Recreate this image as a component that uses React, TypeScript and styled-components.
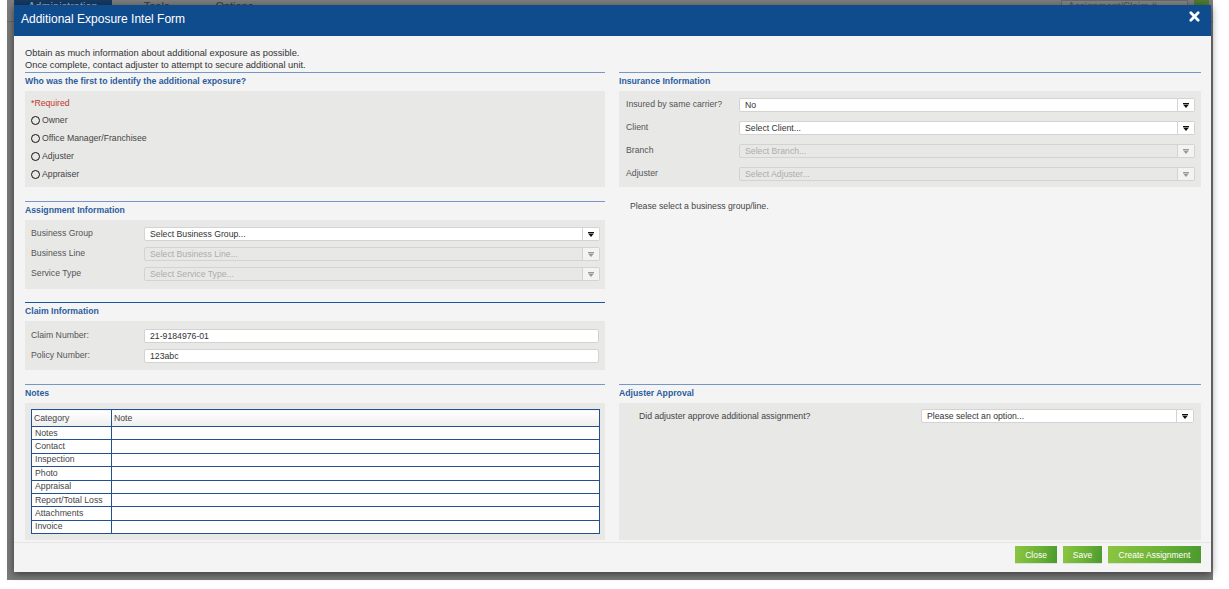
import React from 'react';
import styled, { createGlobalStyle } from 'styled-components';

const Global = createGlobalStyle`
  html, body { margin: 0; padding: 0; background: #fff; }
  body { font-family: "Liberation Sans", Arial, sans-serif; }
  * { box-sizing: border-box; }
`;

const Screen = styled.div`
  width: 1229px;
  height: 589px;
  overflow: hidden;
  background: #fff;
`;

const Backdrop = styled.div`
  position: relative;
  margin-left: 7px;
  width: 1206px;
  height: 580px;
  background: #7b7b7b;
`;

const NavBar = styled.div`
  height: 22px;
  display: flex;
  align-items: stretch;
  padding-left: 7px;
  background: #7e7e7e;
  border-bottom: 1px solid #6a6a6a;
`;

const NavTab = styled.div<{ $active?: boolean }>`
  padding: 0 14px;
  font-size: 11px;
  line-height: 12px;
  color: ${(p) => (p.$active ? '#9fb0c4' : '#3a3a3a')};
  background: ${(p) => (p.$active ? '#163a63' : 'transparent')};
  margin-right: 18px;
`;

const NavSpacer = styled.div`
  flex: 1;
`;

const NavSearch = styled.div`
  width: 127px;
  height: 14px;
  border: 1px solid #6a6a6a;
  background: #858585;
  font-size: 10px;
  line-height: 12px;
  color: #5a5a5a;
  padding-left: 6px;
`;

const NavGo = styled.div`
  width: 15px;
  height: 10px;
  margin: 0 4px 0 6px;
  background: #4e7b30;
`;

const Modal = styled.div`
  position: absolute;
  left: 7px;
  top: 5px;
  width: 1197px;
  height: 567px;
  background: #f4f4f4;
  display: flex;
  flex-direction: column;
  box-shadow: 0 2px 8px rgba(0, 0, 0, 0.55);
`;

const Header = styled.div`
  height: 31px;
  flex: none;
  background: #0f4c8e;
  display: flex;
  align-items: center;
  justify-content: space-between;
  padding: 0 11px 3px 7px;
`;

const Title = styled.div`
  color: #fff;
  font-size: 12px;
`;

const CloseIcon = styled.svg`
  width: 11px;
  height: 11px;
  margin-top: -5px;
`;

const Body = styled.div`
  flex: 1;
  padding: 11px 10px 0 11px;
  display: flex;
  flex-direction: column;
`;

const Intro = styled.div`
  font-size: 9.3px;
  line-height: 12px;
  color: #333;
  height: 25px;
`;

const Columns = styled.div`
  display: grid;
  grid-template-columns: 580px 582px;
  column-gap: 14px;
  row-gap: 14px;
`;

const Stack = styled.div<{ $gap?: number }>`
  display: flex;
  flex-direction: column;
  gap: ${(p) => p.$gap ?? 14}px;
`;

const Section = styled.div<{ $mt?: number }>`
  display: flex;
  flex-direction: column;
  margin-top: ${(p) => p.$mt ?? 0}px;
`;

const SectionHeader = styled.div<{ $dark?: boolean }>`
  border-top: 1px solid ${(p) => (p.$dark ? '#1b56a0' : '#7497c5')};
  height: 19px;
  line-height: 16px;
  font-size: 8.7px;
  font-weight: bold;
  color: #2b5d9d;
`;

const Panel = styled.div<{ $pad?: string; $gap?: number; $grow?: boolean }>`
  background: #e8e8e7;
  padding: ${(p) => p.$pad ?? '7px 6px 7px 6px'};
  display: flex;
  flex-direction: column;
  gap: ${(p) => p.$gap ?? 6}px;
  flex: ${(p) => (p.$grow ? 1 : 'none')};
`;

const Required = styled.div`
  font-size: 8.7px;
  line-height: 12px;
  color: #c0392b;
  margin-bottom: 2px;
`;

const RadioRow = styled.label`
  height: 18px;
  display: flex;
  align-items: center;
  gap: 2px;
  font-size: 8.7px;
  color: #444;
`;

const RadioCircle = styled.span`
  width: 9px;
  height: 9px;
  border: 1.3px solid #111;
  border-radius: 50%;
  flex: none;
`;

const FieldRow = styled.div`
  display: grid;
  grid-template-columns: 113px 1fr;
  align-items: center;
  height: 14px;
`;

const Label = styled.div`
  font-size: 8.7px;
  color: #555;
  margin-top: -3px;
`;

const SelectBox = styled.div<{ $disabled?: boolean }>`
  height: 14px;
  display: flex;
  background: ${(p) => (p.$disabled ? '#e8e8e7' : '#fff')};
  border: 1px solid #d3d3d3;
  border-radius: 2px;
  font-size: 8.7px;
  color: ${(p) => (p.$disabled ? '#adadad' : '#333')};
`;

const SelectText = styled.span`
  flex: 1;
  padding-left: 5px;
  line-height: 12px;
  white-space: nowrap;
  overflow: hidden;
`;

const SelectArrow = styled.span<{ $disabled?: boolean }>`
  width: 17px;
  flex: none;
  border-left: 1px solid #d3d3d3;
  background: ${(p) => (p.$disabled ? '#f3f3f3' : '#fff')};
  display: flex;
  align-items: center;
  justify-content: center;
`;

const TextInput = styled.div`
  height: 14px;
  background: #fff;
  border: 1px solid #d3d3d3;
  border-radius: 2px;
  font-size: 8.7px;
  line-height: 12px;
  color: #333;
  padding-left: 5px;
`;

const Message = styled.div`
  font-size: 8.7px;
  color: #444;
  padding: 14px 0 0 11px;
`;

const NotesTable = styled.table`
  width: 569px;
  border-collapse: collapse;
  background: #fff;
  font-size: 8.7px;
  color: #444;
  border: 1px solid #23508f;
`;

const Th = styled.th<{ $w?: number }>`
  border: 1px solid #23508f;
  text-align: left;
  font-weight: normal;
  padding: 0 2px;
  height: 17px;
  width: ${(p) => (p.$w ? `${p.$w}px` : 'auto')};
  background: linear-gradient(#ffffff, #eeeeee);
`;

const Td = styled.td`
  border: 1px solid #23508f;
  padding: 0 3px;
  height: 13.4px;
  line-height: 11px;
`;

const ApprovalRow = styled.div`
  display: grid;
  grid-template-columns: 1fr 273px;
  align-items: start;
  font-size: 8.7px;
  color: #444;
`;

const ApprovalText = styled.div`
  padding-top: 2px;
`;

const Footer = styled.div`
  height: 30px;
  flex: none;
  border-top: 1px solid #e6e6e6;
  display: flex;
  justify-content: flex-end;
  align-items: flex-start;
  gap: 6px;
  padding: 3px 10px 0 0;
`;

const GreenButton = styled.button<{ $w: number }>`
  width: ${(p) => p.$w}px;
  height: 17px;
  border: none;
  padding: 0;
  font-family: "Liberation Sans", Arial, sans-serif;
  font-size: 8.5px;
  color: #fff;
  background: linear-gradient(100deg, #8cc641 0%, #6cb236 55%, #4b9a2f 100%);
  box-shadow: 0 1px 0 rgba(0, 0, 0, 0.08);
`;

const Arrow = ({ disabled }: { disabled?: boolean }) => (
  <svg width="6" height="5" viewBox="0 0 6 5">
    <rect x="0" y="0" width="6" height="1" fill={disabled ? '#999' : '#111'} />
    <polygon points="0,1.6 6,1.6 3,5" fill={disabled ? '#999' : '#111'} />
  </svg>
);

const Select = ({ text, disabled }: { text: string; disabled?: boolean }) => (
  <SelectBox $disabled={disabled}>
    <SelectText>{text}</SelectText>
    <SelectArrow $disabled={disabled}>
      <Arrow disabled={disabled} />
    </SelectArrow>
  </SelectBox>
);

const radios = ['Owner', 'Office Manager/Franchisee', 'Adjuster', 'Appraiser'];
const categories = ['Notes', 'Contact', 'Inspection', 'Photo', 'Appraisal', 'Report/Total Loss', 'Attachments', 'Invoice'];

export default function App() {
  return (
    <Screen>
      <Global />
      <Backdrop>
        <NavBar>
          <NavTab $active>Administration</NavTab>
          <NavTab>Tools</NavTab>
          <NavTab>Options</NavTab>
          <NavSpacer />
          <NavSearch>Assignment/Claim #</NavSearch>
          <NavGo />
        </NavBar>
        <Modal>
          <Header>
            <Title>Additional Exposure Intel Form</Title>
            <CloseIcon viewBox="0 0 12 12">
              <path d="M2 2 L10 10 M10 2 L2 10" stroke="#fff" strokeWidth="3" strokeLinecap="round" />
            </CloseIcon>
          </Header>
          <Body>
            <Intro>
              Obtain as much information about additional exposure as possible.
              <br />
              Once complete, contact adjuster to attempt to secure additional unit.
            </Intro>
            <Columns>
              <Stack $gap={14}>
                <Section>
                  <SectionHeader>Who was the first to identify the additional exposure?</SectionHeader>
                  <Panel $pad="6px 6px 4px 6px" $gap={0}>
                    <Required>*Required</Required>
                    {radios.map((r) => (
                      <RadioRow key={r}>
                        <RadioCircle />
                        {r}
                      </RadioRow>
                    ))}
                  </Panel>
                </Section>
                <Section>
                  <SectionHeader>Assignment Information</SectionHeader>
                  <Panel $pad="7px 5px 8px 6px">
                    <FieldRow>
                      <Label>Business Group</Label>
                      <Select text="Select Business Group..." />
                    </FieldRow>
                    <FieldRow>
                      <Label>Business Line</Label>
                      <Select text="Select Business Line..." disabled />
                    </FieldRow>
                    <FieldRow>
                      <Label>Service Type</Label>
                      <Select text="Select Service Type..." disabled />
                    </FieldRow>
                  </Panel>
                </Section>
                <Section $mt={-1}>
                  <SectionHeader $dark>Claim Information</SectionHeader>
                  <Panel $pad="8px 6px 7px 6px">
                    <FieldRow>
                      <Label>Claim Number:</Label>
                      <TextInput>21-9184976-01</TextInput>
                    </FieldRow>
                    <FieldRow>
                      <Label>Policy Number:</Label>
                      <TextInput>123abc</TextInput>
                    </FieldRow>
                  </Panel>
                </Section>
              </Stack>
              <Stack $gap={0}>
                <Section>
                  <SectionHeader>Insurance Information</SectionHeader>
                  <Panel $pad="7px 6px 6px 7px" $gap={9}>
                    <FieldRow>
                      <Label>Insured by same carrier?</Label>
                      <Select text="No" />
                    </FieldRow>
                    <FieldRow>
                      <Label>Client</Label>
                      <Select text="Select Client..." />
                    </FieldRow>
                    <FieldRow>
                      <Label>Branch</Label>
                      <Select text="Select Branch..." disabled />
                    </FieldRow>
                    <FieldRow>
                      <Label>Adjuster</Label>
                      <Select text="Select Adjuster..." disabled />
                    </FieldRow>
                  </Panel>
                </Section>
                <Message>Please select a business group/line.</Message>
              </Stack>
              <Section>
                <SectionHeader>Notes</SectionHeader>
                <Panel $pad="6px 5px 6px 6px" $grow>
                  <NotesTable>
                    <thead>
                      <tr>
                        <Th $w={80}>Category</Th>
                        <Th>Note</Th>
                      </tr>
                    </thead>
                    <tbody>
                      {categories.map((c) => (
                        <tr key={c}>
                          <Td>{c}</Td>
                          <Td />
                        </tr>
                      ))}
                    </tbody>
                  </NotesTable>
                </Panel>
              </Section>
              <Section>
                <SectionHeader>Adjuster Approval</SectionHeader>
                <Panel $pad="6px 7px 6px 20px" $grow>
                  <ApprovalRow>
                    <ApprovalText>Did adjuster approve additional assignment?</ApprovalText>
                    <Select text="Please select an option..." />
                  </ApprovalRow>
                </Panel>
              </Section>
            </Columns>
          </Body>
          <Footer>
            <GreenButton $w={42}>Close</GreenButton>
            <GreenButton $w={39}>Save</GreenButton>
            <GreenButton $w={93}>Create Assignment</GreenButton>
          </Footer>
        </Modal>
      </Backdrop>
    </Screen>
  );
}
